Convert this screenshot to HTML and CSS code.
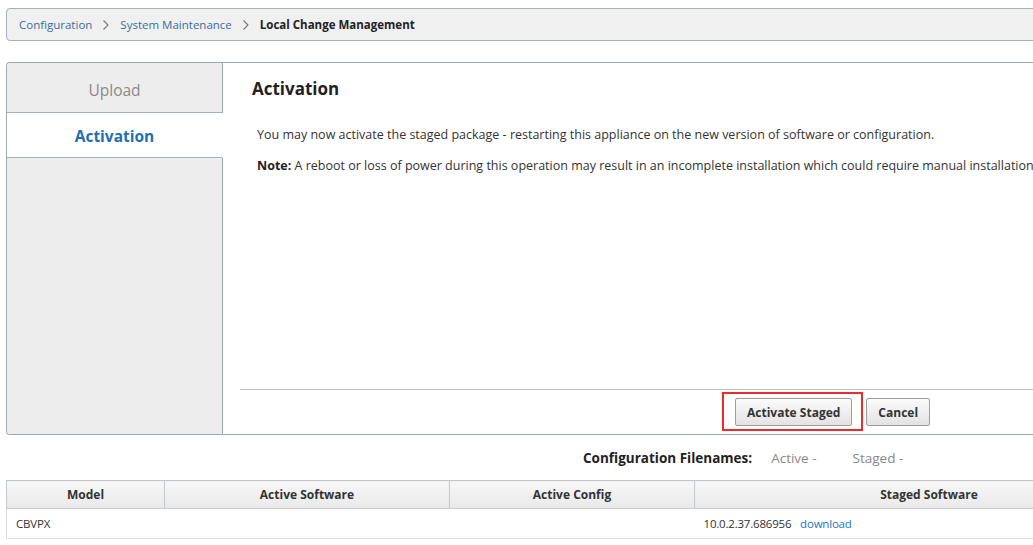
FILE: index.html
```html
<!DOCTYPE html>
<html>
<head>
<meta charset="utf-8">
<link rel="stylesheet" href="styles.css">
</head>
<body>
<div class="page">
  <nav class="crumbs">
    <a class="crumb">Configuration</a>
    <span class="sep"><svg width="8" height="12" viewBox="0 0 8 12"><path d="M1.5 1.5 L6 6 L1.5 10.5" fill="none" stroke="#777" stroke-width="1.1"/></svg></span>
    <a class="crumb">System Maintenance</a>
    <span class="sep"><svg width="8" height="12" viewBox="0 0 8 12"><path d="M1.5 1.5 L6 6 L1.5 10.5" fill="none" stroke="#777" stroke-width="1.1"/></svg></span>
    <span class="crumb current">Local Change Management</span>
  </nav>

  <section class="panel">
    <aside class="tabs">
      <div class="tab">Upload</div>
      <div class="tab active">Activation</div>
      <div class="tab-fill"></div>
    </aside>
    <div class="content">
      <h2 class="title">Activation</h2>
      <div class="body">
        <p>You may now activate the staged package - restarting this appliance on the new version of software or configuration.</p>
        <p><b>Note:</b> A reboot or loss of power during this operation may result in an incomplete installation which could require manual installation</p>
      </div>
      <div class="actions">
        <span class="highlight-wrap">
          <button class="btn">Activate Staged</button>
          <span class="highlight"></span>
        </span>
        <button class="btn">Cancel</button>
      </div>
    </div>
  </section>

  <div class="filenames">
    <b>Configuration Filenames:</b>
    <span class="fn">Active -</span>
    <span class="fn">Staged -</span>
  </div>

  <table class="grid">
    <thead>
      <tr>
        <th class="c1">Model</th>
        <th class="c2">Active Software</th>
        <th class="c3">Active Config</th>
        <th class="c4">Staged Software</th>
      </tr>
    </thead>
    <tbody>
      <tr>
        <td>CBVPX</td>
        <td></td>
        <td></td>
        <td class="staged">10.0.2.37.686956 <a class="link">download</a></td>
      </tr>
    </tbody>
  </table>
</div>
</body>
</html>
```

FILE: styles.css
```css
html, body {
  margin: 0;
  padding: 0;
  overflow: hidden;
  background: #fff;
}
body {
  font-family: "Open Sans", "Noto Sans", sans-serif;
  font-size: 12px;
  color: #333;
}
.page {
  width: 1160px;
  padding: 8px 0 0 6px;
}
.crumbs {
  display: flex;
  align-items: center;
  height: 31px;
  background: #f0f0f0;
  border: 1px solid #a7b0b8;
  border-radius: 4px;
  padding-left: 12px;
  font-size: 11.5px;
}
.crumb {
  color: #3a6d98;
}
.crumb.current {
  color: #222;
  font-weight: 700;
}
.sep {
  display: flex;
  margin: 0 10px 0 10px;
  padding-top: 1px;
}
.panel {
  margin-top: 21px;
  height: 371px;
  display: flex;
  border: 1px solid #9ea8b1;
  border-right: none;
  border-radius: 4px 0 0 4px;
  overflow: hidden;
}
.tabs {
  width: 216px;
  flex: none;
  display: flex;
  flex-direction: column;
  background: #ededed;
}
.tab {
  height: 50px;
  display: flex;
  align-items: center;
  justify-content: center;
  padding-top: 4px;
  font-size: 15.5px;
  color: #8a8a8a;
  border-right: 1px solid #9ea8b1;
  border-bottom: 1px solid #a9b1b8;
  box-sizing: border-box;
}
.tab.active {
  height: 45px;
  padding-top: 1px;
  background: #fff;
  color: #1d6fb4;
  font-weight: 700;
  border-right-color: #fff;
}
.tab-fill {
  flex: 1;
  border-right: 1px solid #9ea8b1;
}
.content {
  flex: 1;
  display: flex;
  flex-direction: column;
}
.title {
  margin: 14px 0 0 29px;
  font-size: 17px;
  font-weight: 700;
  color: #222;
  line-height: 24px;
}
.body {
  flex: 1;
  padding: 25px 0 0 34px;
  font-size: 12.5px;
}
.body p {
  margin: 0 0 13px;
  line-height: 18px;
  white-space: nowrap;
  color: #333;
}
.body b {
  color: #222;
}
.actions {
  margin-left: 17px;
  border-top: 1px solid #b9bfc5;
  height: 44px;
  display: flex;
  align-items: center;
  padding-left: 495px;
  gap: 14px;
}
.highlight-wrap {
  position: relative;
  display: flex;
}
.highlight {
  position: absolute;
  left: -13px;
  top: -6px;
  width: 137px;
  height: 35px;
  border: 2px solid #ee2a2a;
  pointer-events: none;
}
.btn {
  height: 28px;
  padding: 0 11px;
  font-family: inherit;
  font-size: 12px;
  font-weight: 700;
  color: #333;
  border: 1px solid #9d9d9d;
  border-radius: 2px;
  background: linear-gradient(#fbfbfb, #e3e3e3);
}
.filenames {
  display: flex;
  align-items: center;
  height: 45px;
  padding-left: 577px;
  font-size: 13.5px;
  color: #222;
}
.filenames .fn {
  color: #888;
  margin-left: 19px;
  margin-right: 17px;
}
.grid {
  border-collapse: collapse;
  width: 1158px;
  table-layout: fixed;
}
.grid th {
  height: 27px;
  padding: 0;
  font-weight: 700;
  font-size: 12px;
  color: #333;
  background: linear-gradient(#f7f7f7, #e9e9e9);
  border: 1px solid #c3c8cc;
  border-bottom-color: #c8cdd1;
}
.c1 { width: 157px; }
.c2 { width: 284px; }
.c3 { width: 244px; }
.grid td {
  height: 29px;
  padding: 0 9px;
  font-size: 11.5px;
  letter-spacing: -0.2px;
  border-bottom: 1px solid #e2e2e2;
  color: #333;
}
.grid td:first-child {
  border-left: 1px solid #dcdcdc;
}
.link {
  color: #1f74c7;
  margin-left: 6px;
}
```
